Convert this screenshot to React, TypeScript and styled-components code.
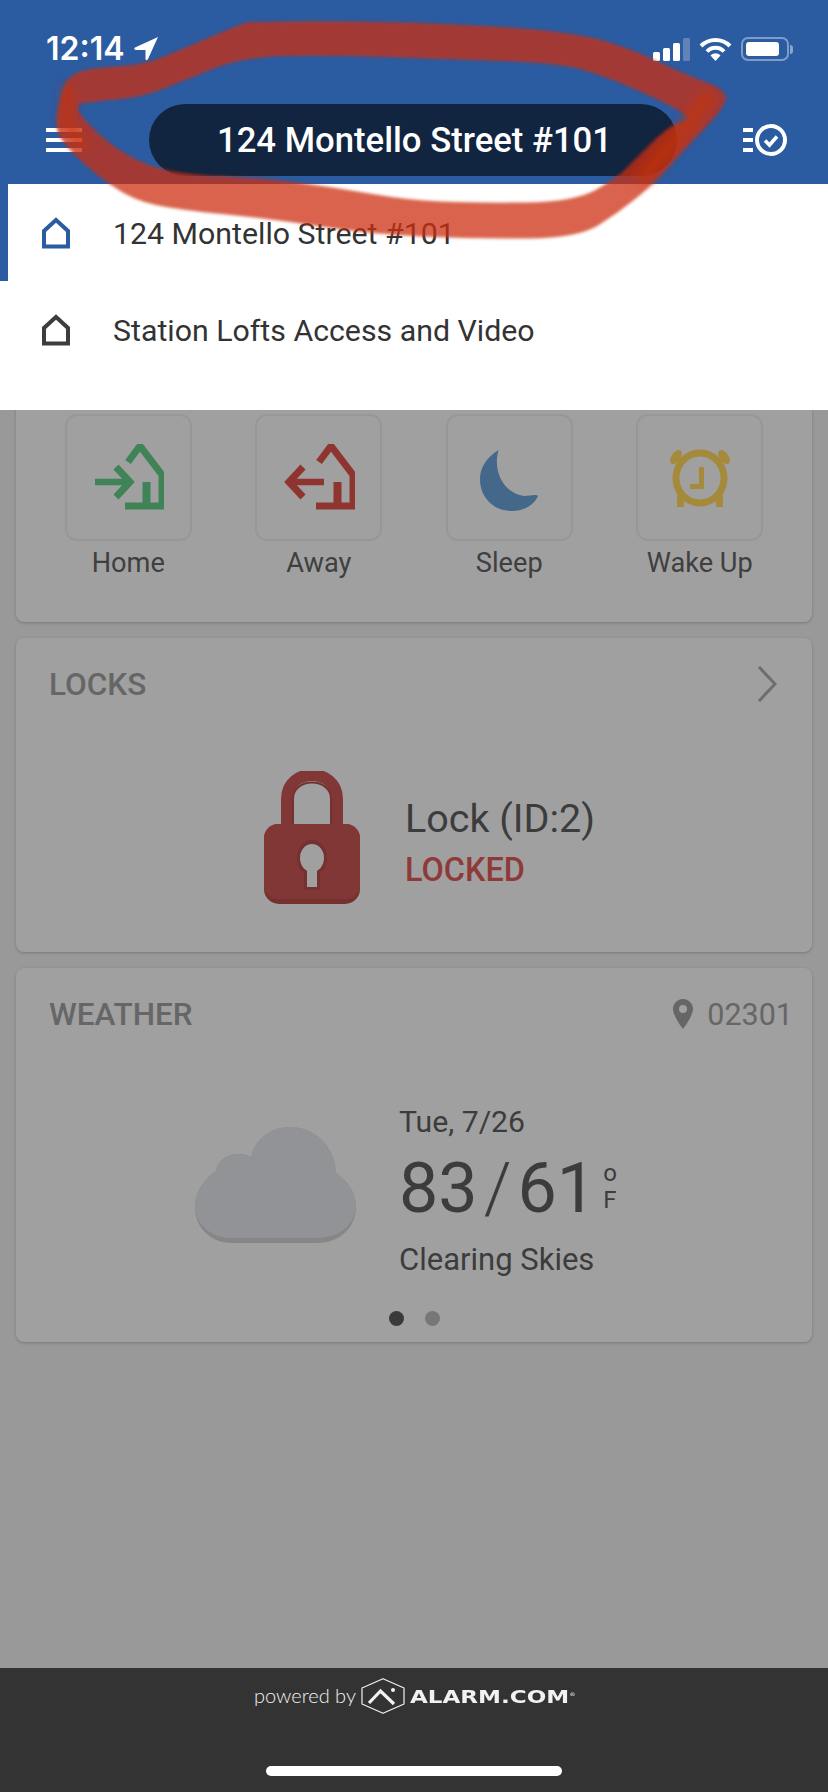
import styled, { createGlobalStyle } from 'styled-components';

const GlobalStyle = createGlobalStyle`
  html, body {
    margin: 0;
    padding: 0;
    background: #999999;
  }
  * {
    box-sizing: border-box;
  }
`;

type Pt = [number, number];

// hand-drawn marker loop from the screenshot, outer and inner edge
const scribbleOuter: Pt[] = [
  [55, 127], [60, 97], [68, 76], [90, 68], [143, 65], [180, 50], [246, 22], [250, 22], [327, 21], [443, 23],
  [575, 32], [634, 50], [681, 73], [730, 91], [720, 113], [686, 147], [655, 183], [618, 213],
  [578, 238], [475, 239], [370, 234], [264, 218], [180, 210], [132, 200], [90, 170], [63, 143],
];
const scribbleInner: Pt[] = [
  [74, 105], [90, 102], [143, 97], [185, 80], [243, 57], [327, 55], [443, 59], [560, 63],
  [607, 77], [660, 100], [694, 119], [670, 125], [634, 160], [618, 177], [575, 202], [475, 203],
  [407, 200], [338, 188], [264, 178], [174, 174], [127, 157], [90, 127],
];

const smoothLoop = (pts: Pt[]) => {
  const mid = (a: Pt, b: Pt) => `${(a[0] + b[0]) / 2} ${(a[1] + b[1]) / 2}`;
  let d = `M${mid(pts[pts.length - 1], pts[0])}`;
  pts.forEach((p, i) => {
    d += ` Q${p[0]} ${p[1]} ${mid(p, pts[(i + 1) % pts.length])}`;
  });
  return d + 'Z';
};

const App = () => {
  return (
    <>
      <GlobalStyle />
      <Page>
        <Header>
          <StatusBar>
            <Clock>
              12:14
              <svg width="24" height="24" viewBox="0 0 24 24">
                <path d="M24 0 L1 10.5 Q-1 12.5 2 13 H11.5 V22 Q12 24.5 14 22 Z" fill="#fff" />
              </svg>
            </Clock>
            <StatusIcons>
              <svg width="37" height="23" viewBox="0 0 37 23">
                <rect x="0" y="14" width="7" height="9" rx="1.5" fill="#fff" />
                <rect x="10" y="10" width="7" height="13" rx="1.5" fill="#fff" />
                <rect x="20" y="5" width="7" height="18" rx="1.5" fill="#fff" />
                <rect x="30" y="0" width="7" height="23" rx="1.5" fill="#fff" opacity="0.25" />
              </svg>
              <svg width="33" height="24" viewBox="0 0 33 24">
                <path d="M2 9 C10 1 23 1 31 9" fill="none" stroke="#fff" strokeWidth="4" />
                <path d="M8 14.5 C12.5 9.5 20.5 9.5 25 14.5" fill="none" stroke="#fff" strokeWidth="4" />
                <path d="M11.5 18.5 C14.5 15.5 18.5 15.5 21.5 18.5 L16.5 24 Z" fill="#fff" />
              </svg>
              <Battery>
                <BatteryFill />
              </Battery>
            </StatusIcons>
          </StatusBar>
          <Toolbar>
            <MenuIcon>
              <span />
              <span />
              <span />
            </MenuIcon>
            <AddressPill>124 Montello Street #101</AddressPill>
            <svg width="44" height="32" viewBox="0 0 44 32">
              <rect x="0" y="4" width="10" height="4" fill="#fff" />
              <rect x="0" y="14" width="10" height="4" fill="#fff" />
              <rect x="0" y="24" width="10" height="4" fill="#fff" />
              <circle cx="28" cy="16" r="14" fill="none" stroke="#fff" strokeWidth="4" />
              <path d="M22 16.5 L26.5 21 L34 12.5" fill="none" stroke="#fff" strokeWidth="3.6" />
            </svg>
          </Toolbar>
        </Header>

        <Content>
          <ScenesCard>
            <SceneGrid>
              <Scene>
                <SceneTile>
                  <svg width="72" height="68" viewBox="-2 3 72 68">
                    <g fill="none" stroke="#3f8356" strokeWidth="7">
                      <path d="M34 21 L46 5 L68 34 V65 H31" />
                      <path d="M1 41 H34" strokeWidth="6.5" />
                      <path d="M22 26 L36 41 L22 56" />
                      <path d="M52.5 41 V64" strokeWidth="8" />
                    </g>
                  </svg>
                </SceneTile>
                <SceneLabel>Home</SceneLabel>
              </Scene>
              <Scene>
                <SceneTile>
                  <svg width="72" height="68" viewBox="-2 3 72 68">
                    <g fill="none" stroke="#8f3530" strokeWidth="7">
                      <path d="M34 21 L46 5 L68 34 V65 H31" />
                      <path d="M3 41 H39" strokeWidth="6.5" />
                      <path d="M18 26 L4 41 L18 56" />
                      <path d="M52.5 41 V64" strokeWidth="8" />
                    </g>
                  </svg>
                </SceneTile>
                <SceneLabel>Away</SceneLabel>
              </Scene>
              <Scene>
                <SceneTile>
                  <svg width="72" height="68" viewBox="-7 -6 72 68">
                    <path
                      d="M18.5 0 C6 8 0 18 0 29 C0 47 13 61 32 61 C44 61 54 55 58 46 C56 44 50 46 44 46 C26 44 12 24 18.5 0Z"
                      fill="#44688a"
                    />
                  </svg>
                </SceneTile>
                <SceneLabel>Sleep</SceneLabel>
              </Scene>
              <Scene>
                <SceneTile>
                  <svg width="72" height="68" viewBox="-6 -6 72 68">
                    <g fill="#a58a3b">
                      <ellipse cx="6" cy="7" rx="4.5" ry="8" transform="rotate(35 6 7)" />
                      <ellipse cx="54" cy="7" rx="4.5" ry="8" transform="rotate(-35 54 7)" />
                      <rect x="7" y="44" width="7" height="13" />
                      <rect x="46" y="44" width="7" height="13" />
                      <rect x="29" y="17" width="5" height="22" />
                      <rect x="20" y="34" width="14" height="5" />
                    </g>
                    <ellipse cx="30" cy="28" rx="24" ry="25" fill="none" stroke="#a58a3b" strokeWidth="7" />
                  </svg>
                </SceneTile>
                <SceneLabel>Wake Up</SceneLabel>
              </Scene>
            </SceneGrid>
          </ScenesCard>

          <LocksCard>
            <LocksHeader>
              <CardTitle>LOCKS</CardTitle>
              <svg width="20" height="36" viewBox="0 0 20 36">
                <path d="M2 1 L18 18 L2 35" fill="none" stroke="#6e6e6e" strokeWidth="3" />
              </svg>
            </LocksHeader>
            <LockRow>
              <svg width="96" height="133" viewBox="0 0 96 133">
                <path d="M28 60 V28 C28 -4 78 -4 78 28 V60" transform="translate(-5 0)" fill="none" stroke="#813735" strokeWidth="12" />
                <path d="M29 58 V28 C29 6 67 6 67 28 V58" fill="none" stroke="#743130" strokeWidth="2" />
                <rect x="0" y="53" width="96" height="80" rx="15" fill="#743130" />
                <rect x="0" y="53" width="96" height="75" rx="14" fill="#813735" />
                <ellipse cx="48" cy="87" rx="15" ry="18" fill="#743130" />
                <rect x="40" y="96" width="16" height="23" fill="#743130" />
                <ellipse cx="48" cy="87" rx="12" ry="14" fill="#a0a0a0" />
                <rect x="43" y="96" width="10" height="20" fill="#a0a0a0" />
              </svg>
              <LockText>
                <LockName>Lock (ID:2)</LockName>
                <LockState>LOCKED</LockState>
              </LockText>
            </LockRow>
          </LocksCard>

          <WeatherCard>
            <CardHeader>
              <CardTitle>WEATHER</CardTitle>
              <ZipCode>
                <svg width="20" height="30" viewBox="0 0 20 30">
                  <path
                    fillRule="evenodd"
                    d="M10 0 C4.5 0 0 4.5 0 10 C0 17 10 30 10 30 C10 30 20 17 20 10 C20 4.5 15.5 0 10 0Z M10 6 A4 4 0 1 1 10 14 A4 4 0 1 1 10 6Z"
                    fill="#666"
                  />
                </svg>
                02301
              </ZipCode>
            </CardHeader>
            <WeatherRow>
              <CloudIcon width="162" height="117" viewBox="0 0 162 117">
                <path
                  d="M0 80 C0 65 9 52 21 44 C22 34 32 27 43 27 C48 27 52 28 56 30 C60 12 76 0 95 0 C120 0 140 20 141 46 C153 54 161 66 161 80 C161 100 145 116 122 116 H37 C15 116 0 100 0 80Z"
                  fill="#868686"
                />
                <path
                  d="M0 78 C0 65 9 52 21 44 C22 34 32 27 43 27 C48 27 52 28 56 30 C60 12 76 0 95 0 C120 0 140 20 141 46 C153 54 161 66 161 78 C161 97 145 111 122 111 H37 C15 111 0 97 0 78Z"
                  fill="#929396"
                />
              </CloudIcon>
              <Forecast>
                <ForecastDate>Tue, 7/26</ForecastDate>
                <TempRow>
                  <Temps>
                    83<TempSlash>/</TempSlash>61
                  </Temps>
                  <TempUnit>
                    <span>o</span>
                    <span>F</span>
                  </TempUnit>
                </TempRow>
                <ForecastText>Clearing Skies</ForecastText>
              </Forecast>
            </WeatherRow>
            <Dots>
              <Dot $active />
              <Dot />
            </Dots>
          </WeatherCard>
        </Content>

        <Footer>
          <PoweredRow>
            <PoweredBy>powered by</PoweredBy>
            <svg width="44" height="36" viewBox="0 0 44 36">
              <path
                d="M22 .7 L43 10 V26 L22 35.3 L1 26 V10 Z"
                fill="none"
                stroke="#f2f2f2"
                strokeWidth="1.2"
                strokeLinejoin="round"
              />
              <path d="M8 25 L19.5 13 L33 26" fill="none" stroke="#f2f2f2" strokeWidth="3.2" />
              <circle cx="32" cy="12" r="2" fill="#f2f2f2" />
            </svg>
            <Brand>
              ALARM.COM<BrandMark>®</BrandMark>
            </Brand>
          </PoweredRow>
          <HomeIndicator />
        </Footer>

        <PropertyMenu>
          <PropertyRow $active>
            <HouseIcon color="#2b5ba1" />
            <PropertyName>124 Montello Street #101</PropertyName>
          </PropertyRow>
          <PropertyRow>
            <HouseIcon color="#3d3d3d" />
            <PropertyName>Station Lofts Access and Video</PropertyName>
          </PropertyRow>
        </PropertyMenu>

        <Scribble viewBox="0 0 828 260" width="828" height="260">
          <defs>
            <filter id="marker" x="-5%" y="-5%" width="110%" height="110%">
              <feGaussianBlur stdDeviation="1.6" />
            </filter>
            <filter id="markerSoft" x="-20%" y="-20%" width="140%" height="140%">
              <feGaussianBlur stdDeviation="5" />
            </filter>
          </defs>
          <path
            d={`${smoothLoop(scribbleOuter)} ${smoothLoop(scribbleInner)}`}
            fillRule="evenodd"
            fill="rgb(204, 47, 10)"
            fillOpacity="0.745"
            filter="url(#marker)"
          />
          {/* the marker went over these parts twice */}
          <g fill="none" stroke="rgb(204, 47, 10)" strokeOpacity="0.5" strokeLinecap="round" filter="url(#markerSoft)">
            <path d="M706 100 L680 135 L645 175" strokeWidth="18" />
            <path d="M68 90 L66 120 L82 145" strokeWidth="12" />
          </g>
        </Scribble>
      </Page>
    </>
  );
};

const HouseIcon = ({ color }: { color: string }) => (
  <svg width="28" height="32" viewBox="0 0 28 32">
    <path d="M14 3 L26 14 V29.5 H2 V14 Z" fill="none" stroke={color} strokeWidth="4" />
  </svg>
);

export default App;

const Page = styled.div`
  position: relative;
  width: 828px;
  height: 1792px;
  display: flex;
  flex-direction: column;
  overflow: hidden;
  background: #999999;
  font-family: Roboto, 'Liberation Sans', sans-serif;
`;

const Header = styled.header`
  height: 184px;
  flex: none;
  background: #2b5ba1;
`;

const StatusBar = styled.div`
  height: 104px;
  padding: 0 33px 6px 46px;
  display: flex;
  align-items: center;
  justify-content: space-between;
`;

const Clock = styled.div`
  display: flex;
  align-items: center;
  gap: 9px;
  color: #ffffff;
  font-family: Inter, 'Liberation Sans', sans-serif;
  font-size: 32px;
  font-weight: 600;
  line-height: 38px;
`;

const StatusIcons = styled.div`
  display: flex;
  align-items: flex-end;
  gap: 9px;
`;

const Battery = styled.div`
  position: relative;
  width: 48px;
  height: 24px;
  margin-right: 6px;
  padding: 3px 8px 3px 3px;
  border: 2px solid rgba(255, 255, 255, 0.4);
  border-radius: 7px;

  &::after {
    content: '';
    position: absolute;
    top: 6px;
    right: -6px;
    width: 3px;
    height: 9px;
    border-radius: 0 3px 3px 0;
    background: rgba(255, 255, 255, 0.45);
  }
`;

const BatteryFill = styled.div`
  width: 100%;
  height: 100%;
  border-radius: 3px;
  background: #ffffff;
`;

const Toolbar = styled.div`
  height: 72px;
  padding: 0 41px 0 46px;
  display: flex;
  align-items: center;
  justify-content: space-between;
`;

const MenuIcon = styled.div`
  width: 36px;
  display: flex;
  flex-direction: column;
  gap: 6px;

  span {
    height: 4px;
    background: #ffffff;
  }
`;

const AddressPill = styled.div`
  width: 528px;
  height: 72px;
  padding-left: 4px;
  border-radius: 36px;
  background: #112440;
  color: #ffffff;
  font-size: 34.7px;
  font-weight: 500;
  display: flex;
  align-items: center;
  justify-content: center;
`;

const Content = styled.main`
  flex: 1;
  padding: 16px;
  display: flex;
  flex-direction: column;
  gap: 16px;
`;

const Card = styled.section`
  background: #a0a0a0;
  border-radius: 8px;
  box-shadow: 0 1px 3px rgba(0, 0, 0, 0.22);
`;

const ScenesCard = styled(Card)`
  height: 422px;
  padding: 0 17px 44px;
  display: flex;
  flex-direction: column;
  justify-content: flex-end;
`;

const SceneGrid = styled.div`
  display: grid;
  grid-template-columns: repeat(4, 1fr);
`;

const Scene = styled.div`
  display: flex;
  flex-direction: column;
  align-items: center;
`;

const SceneTile = styled.div`
  width: 127px;
  height: 127px;
  border: 2px solid #979797;
  border-radius: 12px;
  display: flex;
  align-items: center;
  justify-content: center;
`;

const SceneLabel = styled.div`
  margin-top: 7px;
  color: #3f3f3f;
  font-size: 27.2px;
  line-height: 30px;
`;

const LocksCard = styled(Card)`
  height: 314px;
`;

const WeatherCard = styled(Card)`
  height: 374px;
  display: flex;
  flex-direction: column;
`;

const CardHeader = styled.div`
  height: 92px;
  padding: 0 19px 0 33px;
  display: flex;
  align-items: center;
  justify-content: space-between;
`;

const LocksHeader = styled(CardHeader)`
  padding-right: 35px;
`;

const CardTitle = styled.h2`
  margin: 0;
  color: #666666;
  font-size: 31.5px;
  font-weight: 500;
`;

const LockRow = styled.div`
  margin-top: 41px;
  padding-left: 248px;
  display: flex;
  align-items: center;
  gap: 45px;
`;

const LockText = styled.div`
  display: flex;
  flex-direction: column;
  gap: 11px;
  margin-top: 8px;
`;

const LockName = styled.div`
  color: #3c3c3c;
  font-size: 39.5px;
  line-height: 46px;
`;

const LockState = styled.div`
  color: #8f3a38;
  font-size: 32.4px;
  font-weight: 500;
  line-height: 34px;
`;

const ZipCode = styled.div`
  display: flex;
  align-items: center;
  gap: 14px;
  color: #666666;
  font-size: 30.5px;
`;

const WeatherRow = styled.div`
  margin-top: 44px;
  padding-left: 179px;
  display: flex;
  align-items: flex-start;
  gap: 42px;
`;

const CloudIcon = styled.svg`
  margin-top: 23px;
`;

const Forecast = styled.div`
  display: flex;
  flex-direction: column;
`;

const ForecastDate = styled.div`
  color: #3c3c3c;
  font-size: 30.2px;
  line-height: 36px;
`;

const TempRow = styled.div`
  display: flex;
  align-items: center;
  gap: 7px;
  margin-top: 8px;
`;

const Temps = styled.div`
  color: #3c3c3c;
  font-size: 70px;
  line-height: 80px;
`;

const TempSlash = styled.span`
  margin: 0 6px;
  font-weight: 300;
`;

const TempUnit = styled.div`
  margin-top: -3px;
  display: flex;
  flex-direction: column;
  color: #3c3c3c;
  font-size: 24px;
  line-height: 27px;
`;

const ForecastText = styled.div`
  margin-top: 14px;
  color: #3c3c3c;
  font-size: 31px;
  line-height: 36px;
`;

const Dots = styled.div`
  margin-top: auto;
  padding-bottom: 16px;
  display: flex;
  justify-content: center;
  gap: 21px;
`;

const Dot = styled.span<{ $active?: boolean }>`
  width: 15px;
  height: 15px;
  border-radius: 50%;
  background: ${(p) => (p.$active ? '#3a3a3a' : '#777777')};
`;

const Footer = styled.footer`
  height: 124px;
  flex: none;
  padding: 10px 0 16px;
  background: #333333;
  display: flex;
  flex-direction: column;
  align-items: center;
  justify-content: space-between;
`;

const PoweredRow = styled.div`
  display: flex;
  align-items: center;
  gap: 5px;
  color: #f2f2f2;
`;

const PoweredBy = styled.span`
  margin-bottom: 3px;
  font-family: Lato, Roboto, sans-serif;
  font-size: 20px;
  font-weight: 300;
`;

const Brand = styled.span`
  width: 164px;
  font-family: 'DejaVu Sans', sans-serif;
  font-size: 18px;
  font-weight: 700;
  transform: scaleX(1.28);
  transform-origin: left center;
`;

const BrandMark = styled.span`
  font-size: 5px;
  font-weight: 400;
  vertical-align: 7px;
`;

const HomeIndicator = styled.div`
  width: 296px;
  height: 10px;
  border-radius: 5px;
  background: #ffffff;
`;

/* dropdown and the marker loop lie over the page */
const PropertyMenu = styled.div`
  position: absolute;
  top: 184px;
  left: 0;
  right: 0;
  height: 226px;
  background: #ffffff;
`;

const PropertyRow = styled.div<{ $active?: boolean }>`
  height: 97px;
  display: flex;
  align-items: center;
  gap: 43px;
  color: #333333;
  font-size: 30.3px;
  border-left: ${(p) => (p.$active ? '8px solid #2b5ba1' : 'none')};
  padding-left: ${(p) => (p.$active ? '34px' : '42px')};
`;

const PropertyName = styled.span`
  margin-top: 2px;
`;

const Scribble = styled.svg`
  position: absolute;
  top: 0;
  left: 0;
  pointer-events: none;
`;
